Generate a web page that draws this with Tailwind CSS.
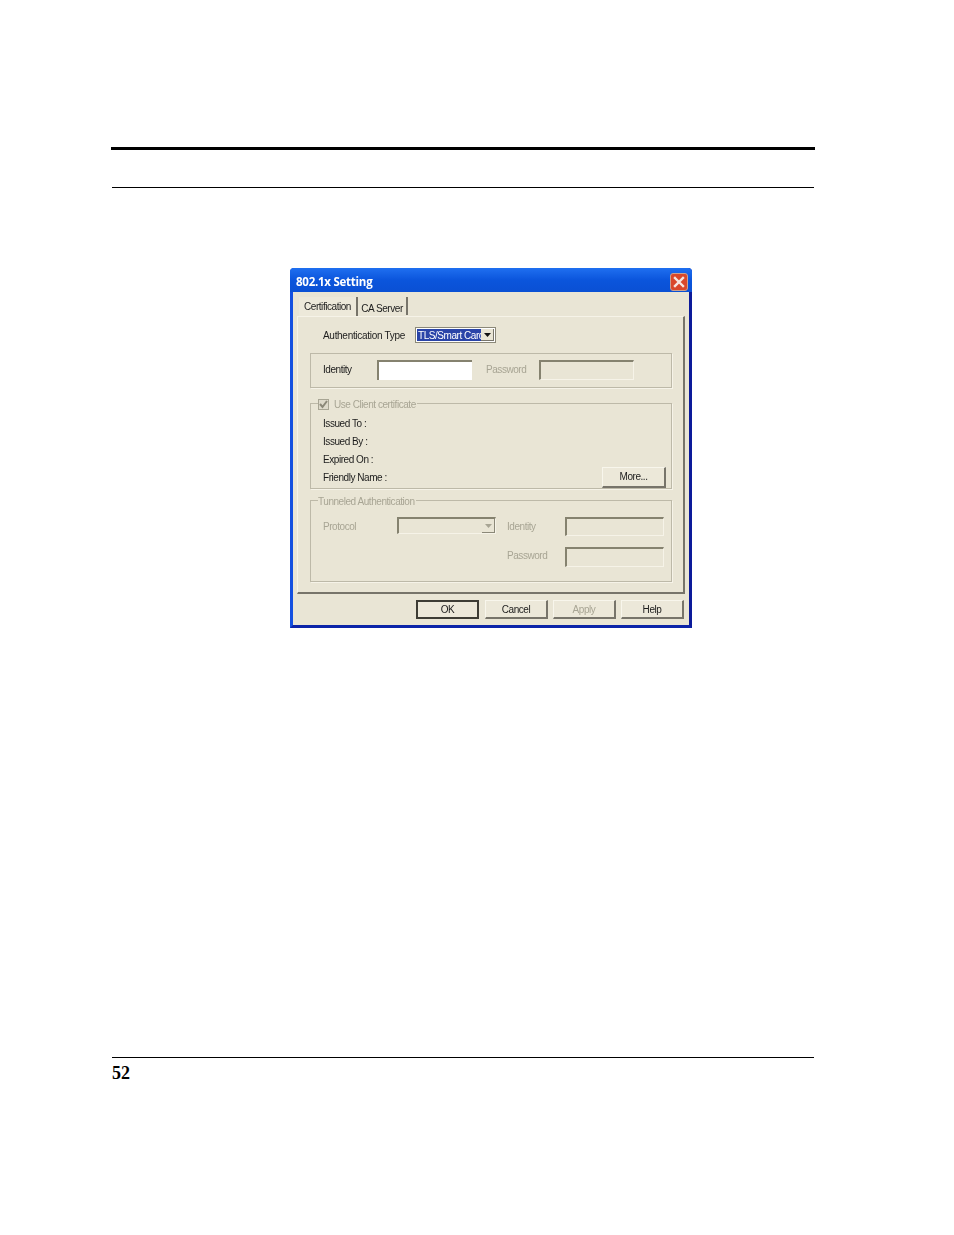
<!DOCTYPE html>
<html>
<head>
<meta charset="utf-8">
<script src="https://cdn.jsdelivr.net/npm/@tailwindcss/browser@4"></script>
<title>802.1x Setting</title>
</head>
<body class="bg-white">
<div class="w-[954px] h-[1235px] pt-[147px] overflow-hidden font-['Liberation_Sans',sans-serif]">
  <!-- page header rules -->
  <div class="ml-[111px] w-[704px] h-[3px] bg-black"></div>
  <div class="ml-[112px] mt-[37px] w-[702px] h-px bg-black"></div>

  <!-- dialog -->
  <div class="ml-[290px] mt-[80px] w-[402px] h-[360px] rounded-t-[4px] flex flex-col bg-[#1450e0] border-r-[3px] border-b-[3px] border-l-[3px] border-r-[#0c1a9a] border-b-[#0c24a8] border-l-[#1450e0] text-[10px] tracking-[-0.45px] whitespace-nowrap text-[#1c1c1c] blur-[0.5px]">
    <!-- title bar -->
    <div class="h-[24px] shrink-0 -mx-[3px] pl-[6px] pr-[4px] pt-[3px] rounded-t-[4px] flex items-center justify-between bg-gradient-to-b from-[#1f6ff0] via-[#0b55dc] to-[#0a50d4]">
      <span class="text-white font-bold text-[11.5px] font-['Open_Sans',sans-serif] tracking-[-0.25px]">802.1x Setting</span>
      <svg width="18" height="18" viewBox="0 0 18 18">
        <rect x="0.5" y="0.5" width="17" height="17" rx="2.5" fill="#d9482a" stroke="#c9a090"/>
        <path d="M5 5 L13 13 M13 5 L5 13" stroke="#f6e6e0" stroke-width="2.4" stroke-linecap="square"/>
      </svg>
    </div>

    <!-- body -->
    <div class="flex-1 bg-[#e9e5d5] pl-[4px] pr-[5px] flex flex-col">
      <!-- tabs -->
      <div class="h-[24px] pl-[2px] flex items-end shrink-0">
        <div class="w-[59px] h-[19px] flex items-center justify-center border-r-2 border-[#77746a] bg-[#ede9da]">Certification</div>
        <div class="w-[50px] h-[18px] flex items-center justify-center border-r-2 border-[#77746a] mb-[1px] pt-[4px]">CA Server</div>
      </div>

      <!-- panel -->
      <div class="h-[278px] w-[388px] shrink-0 pl-[12px] border-t border-l border-t-[#f6f3e8] border-l-[#f6f3e8] border-r-2 border-b-2 border-r-[#77746a] border-b-[#77746a]">
        <div class="pt-[10px] flex items-center">
          <span class="w-[105px] pl-[13px] tracking-[-0.3px]">Authentication Type</span>
          <div class="w-[81px] h-[16px] flex items-center border border-[#8b8878] bg-white p-px">
            <span class="flex-1 h-full overflow-hidden bg-[#2a44a8] text-white leading-[13px] pl-px">TLS/Smart Card</span>
            <span class="w-[13px] h-full flex items-center justify-center bg-[#e9e5d5] border-r border-b border-[#77746a]">
              <svg width="7" height="4" viewBox="0 0 7 4"><path d="M0 0 H7 L3.5 4 Z" fill="#111"/></svg>
            </span>
          </div>
        </div>

        <!-- identity group -->
        <div class="mt-[10px] w-[362px] h-[35px] pb-[2px] border border-[#bdb9a8] shadow-[1px_1px_0_#f6f3e8] flex items-center pl-[12px]">
          <span class="w-[54px]">Identity</span>
          <div class="w-[95px] h-[20px] bg-white border-t-2 border-l-2 border-[#85826f]"></div>
          <span class="ml-[14px] w-[53px] text-[#a8a594]">Password</span>
          <div class="w-[95px] h-[20px] border-t-2 border-l-2 border-t-[#85826f] border-l-[#85826f] border-r border-b border-r-[#f6f3e8] border-b-[#f6f3e8]"></div>
        </div>

        <!-- client certificate group -->
        <div class="relative mt-[15px] w-[362px] h-[86px] border border-[#bdb9a8] shadow-[1px_1px_0_#f6f3e8] pl-[12px] pt-[10px]">
          <div class="absolute -top-[6px] left-[7px] h-[12px] pr-[1px] flex items-center gap-[5px] bg-[#e9e5d5] text-[#a8a594]">
            <span class="w-[11px] h-[11px] border border-[#a8a594] bg-[#dedacb] flex items-center justify-center">
              <svg width="9" height="9" viewBox="0 0 9 9"><path d="M1 4 L3.5 7 L8 1" fill="none" stroke="#8b8878" stroke-width="2"/></svg>
            </span>
            <span>Use Client certificate</span>
          </div>
          <div class="h-[18px] flex items-center">Issued To :</div>
          <div class="h-[18px] flex items-center">Issued By :</div>
          <div class="h-[18px] flex items-center">Expired On :</div>
          <div class="h-[18px] flex items-center justify-between pr-[5px]">
            <span>Friendly Name :</span>
            <div class="w-[64px] h-[21px] flex items-center justify-center bg-[#ece8d9] border-t border-l border-t-[#f8f6ec] border-l-[#f8f6ec] border-r-2 border-b-2 border-r-[#77746a] border-b-[#77746a]">More...</div>
          </div>
        </div>

        <!-- tunneled authentication group -->
        <div class="relative mt-[11px] w-[362px] h-[82px] border border-[#bdb9a8] shadow-[1px_1px_0_#f6f3e8] pl-[12px] pt-[16px] text-[#a8a594]">
          <div class="absolute -top-[6px] left-[7px] h-[12px] pr-[1px] flex items-center bg-[#e9e5d5]">Tunneled Authentication</div>
          <div class="flex items-center h-[19px]">
            <span class="w-[74px]">Protocol</span>
            <div class="self-start w-[99px] h-[17px] flex items-center justify-end border-t-2 border-l-2 border-t-[#85826f] border-l-[#85826f] border-r border-b border-r-[#f6f3e8] border-b-[#f6f3e8]">
              <span class="w-[13px] h-[14px] flex items-center justify-center border-r border-b border-[#8b8878]">
                <svg width="7" height="4" viewBox="0 0 7 4"><path d="M0 0 H7 L3.5 4 Z" fill="#a8a594"/></svg>
              </span>
            </div>
            <span class="ml-[11px] w-[58px]">Identity</span>
            <div class="w-[99px] h-[19px] border-t-2 border-l-2 border-t-[#85826f] border-l-[#85826f] border-r border-b border-r-[#f6f3e8] border-b-[#f6f3e8]"></div>
          </div>
          <div class="flex items-center justify-end h-[20px] mt-[11px] pr-[7px]">
            <span class="w-[58px] pb-[4px]">Password</span>
            <div class="w-[99px] h-[20px] border-t-2 border-l-2 border-t-[#85826f] border-l-[#85826f] border-r border-b border-r-[#f6f3e8] border-b-[#f6f3e8]"></div>
          </div>
        </div>
      </div>

      <!-- bottom buttons -->
      <div class="mt-[6px] w-[387px] flex justify-end gap-[5px]">
        <div class="w-[63px] h-[19px] mr-px flex items-center justify-center bg-[#ece8d9] border-2 border-[#3d3c34]">OK</div>
        <div class="w-[63px] h-[19px] flex items-center justify-center bg-[#ece8d9] border-t border-l border-t-[#f8f6ec] border-l-[#f8f6ec] border-r-2 border-b-2 border-r-[#77746a] border-b-[#77746a]">Cancel</div>
        <div class="w-[63px] h-[19px] flex items-center justify-center bg-[#ece8d9] text-[#a8a594] border-t border-l border-t-[#f8f6ec] border-l-[#f8f6ec] border-r-2 border-b-2 border-r-[#77746a] border-b-[#77746a]">Apply</div>
        <div class="w-[63px] h-[19px] flex items-center justify-center bg-[#ece8d9] border-t border-l border-t-[#f8f6ec] border-l-[#f8f6ec] border-r-2 border-b-2 border-r-[#77746a] border-b-[#77746a]">Help</div>
      </div>
    </div>
  </div>

  <!-- page footer -->
  <div class="ml-[112px] mt-[429px] w-[702px] h-px bg-black"></div>
  <div class="ml-[112px] mt-[5px] font-['Liberation_Serif',serif] font-bold text-[18px] leading-[20px] text-black">52</div>
</div>
</body>
</html>
